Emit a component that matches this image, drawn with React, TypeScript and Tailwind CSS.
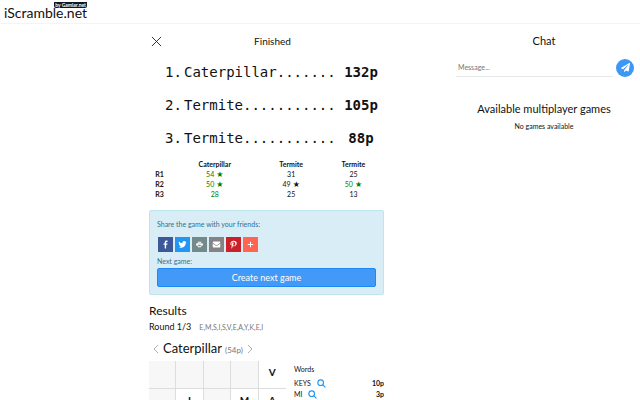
import React, { useState } from "react";

const standings = [
  { place: 1, name: "Caterpillar", points: 132 },
  { place: 2, name: "Termite", points: 105 },
  { place: 3, name: "Termite", points: 88 },
];

const rounds = [
  {
    label: "R1",
    scores: [
      { value: 54, star: true, green: true },
      { value: 31, star: false, green: false },
      { value: 25, star: false, green: false },
    ],
  },
  {
    label: "R2",
    scores: [
      { value: 50, star: true, green: true },
      { value: 49, star: true, green: false },
      { value: 50, star: true, green: true },
    ],
  },
  {
    label: "R3",
    scores: [
      { value: 28, star: false, green: true },
      { value: 25, star: false, green: false },
      { value: 13, star: false, green: false },
    ],
  },
];

const shareLinks = [
  {
    label: "Facebook",
    color: "bg-[#3b5998]",
    icon: (
      <path d="M17.8 27.5V17h3.5l.5-4h-4v-2.5c0-1.200.3-2 2-2H22V4.900C21.600 4.800 20.300 4.700 18.900 4.700c-3 0-5.100 1.900-5.100 5.300V13h-3.500v4h3.500v10.500z" />
    ),
  },
  {
    label: "Twitter",
    color: "bg-[#2196f3]",
    icon: (
      <path d="M28 8.600a10 10 0 0 1-2.800.8 5 5 0 0 0 2.100-2.700c-1 .6-2 1-3.100 1.200a4.900 4.900 0 0 0-8.400 4.500A14 14 0 0 1 5.700 7.200a4.900 4.900 0 0 0 1.500 6.600c-.8 0-1.600-.2-2.200-.6v.1a4.900 4.900 0 0 0 3.900 4.800 5 5 0 0 1-2.200.1 4.900 4.900 0 0 0 4.600 3.400A9.900 9.900 0 0 1 4 23.600a14 14 0 0 0 7.500 2.200c9.100 0 14-7.500 14-14v-.6A10 10 0 0 0 28 8.600z" />
    ),
  },
  {
    label: "Print",
    color: "bg-[#738a8d]",
    icon: (
      <path
        fillRule="evenodd"
        d="M11 8h10v3H11zM9 12h14a3 3 0 0 1 3 3v4h-4l-2 5h-8l-2-5H6v-4a3 3 0 0 1 3-3zM12 17l1 4h6l1-4z"
      />
    ),
  },
  {
    label: "Email",
    color: "bg-[#848484]",
    icon: (
      <path d="M27 22.800c0 1.200-1 2.200-2.200 2.200H7.200C6 25 5 24 5 22.800V13l8 6.200c2 1.500 4 1.500 6 0l8-6.200zM27 9.500c0 .8-.6 1.500-1.200 2L18 17.300c-1.300.9-2.700.9-4 0L6.200 11.500c-.6-.5-1.200-1.200-1.200-2C5 8 6 7 7.200 7h17.600C26 7 27 8 27 9.500z" />
    ),
  },
  {
    label: "Pinterest",
    color: "bg-[#cb2027]",
    icon: (
      <path d="M16.500 5C10.500 5 7 9.100 7 13.500c0 2.100 1.100 4.600 2.900 5.400.5.200.5 0 .9-1.700 0-.2 0-.3-.1-.5-2.200-2.700-.9-9 4.900-9 8.300 0 6.700 11.700 1.800 11.700-1.500 0-2.700-1.200-2.300-2.700.5-1.800 1.300-3.700 1.300-5 0-3.200-4.600-2.700-4.600 1.500 0 1.300.4 2.200.4 2.200l-1.900 7.900c-.4 1.800 0 4.700.1 5 1-1.300 2.200-3.600 2.600-5.200l1-3.600c.5 1 2 1.800 3.500 1.800 4.700 0 8-4.200 8-9.400C25.500 7.700 21.500 5 16.500 5z" />
    ),
  },
  {
    label: "More",
    color: "bg-[#ff6550]",
    icon: <path d="M14.500 8h3v6.500H24v3h-6.500V24h-3v-6.500H8v-3h6.500z" />,
  },
];

const board = [
  ["", "", "", "", "V"],
  ["", "I", "", "M", "A"],
];

const words = [
  { word: "KEYS", points: 10 },
  { word: "MI", points: 3 },
];

const Header = () => (
  <header className="h-6 shrink-0 border-b border-gray-100 px-1">
    <a href="#home" className="relative inline-block text-sm leading-6">
      iScramble.net
      <span className="absolute right-0 top-px rounded-b-xs bg-[#101820] px-px text-[5px] font-bold leading-[6px] text-white">
        by Gamiar.net
      </span>
    </a>
  </header>
);

const Standings = () => (
  <ol className="pl-4 pr-[5px] font-['DejaVu_Sans_Mono',monospace] text-sm leading-[33px]">
    {standings.map((player) => (
      <li key={player.place} className="flex">
        <span className="w-[19px] shrink-0">{player.place}.</span>
        <span className="min-w-0 flex-1 whitespace-nowrap">
          {player.name.padEnd(18, ".")}
        </span>
        <strong className="w-9 shrink-0 text-center">{player.points}p</strong>
      </li>
    ))}
  </ol>
);

const RoundTable = () => (
  <table className="mt-1 w-full table-fixed text-center text-[7px] leading-[10px]">
    <colgroup>
      <col className="w-[9%]" />
      <col className="w-[38%]" />
      <col className="w-[27%]" />
      <col className="w-[26%]" />
    </colgroup>
    <thead>
      <tr>
        <th></th>
        {standings.map((player) => (
          <th key={player.place}>{player.name}</th>
        ))}
      </tr>
    </thead>
    <tbody>
      {rounds.map((round) => (
        <tr key={round.label}>
          <th scope="row">{round.label}</th>
          {round.scores.map((score, i) => (
            <td key={i} className={score.green ? "text-[#008000]" : ""}>
              {score.value}
              {score.star && <span className="text-[8px] leading-none"> ★</span>}
            </td>
          ))}
        </tr>
      ))}
    </tbody>
  </table>
);

const SharePanel = () => (
  <section className="mt-[11px] rounded-xs border border-[#bee5eb] bg-[#d9edf7] p-[7px] text-[7px] text-[#31708f]">
    <p className="leading-3">Share the game with your friends:</p>
    <div className="mt-[7px] flex gap-[2px] px-px">
      {shareLinks.map((link) => (
        <a
          key={link.label}
          href="#share"
          aria-label={link.label}
          className={`flex size-[15px] items-center justify-center ${link.color}`}
        >
          <svg viewBox="0 0 32 32" className="size-[11px] fill-white">
            {link.icon}
          </svg>
        </a>
      ))}
    </div>
    <p className="mt-[3px] leading-3">Next game:</p>
    <button className="mt-px block h-[19px] w-full rounded-xs border border-[#1e88f5] bg-[#4299f7] text-[9px] leading-4 text-white">
      Create next game
    </button>
  </section>
);

const Chevron = ({ d }: { d: string }) => (
  <svg
    viewBox="0 0 6 10"
    className="h-[10px] w-[6px] fill-none stroke-[#b0b0b0]"
  >
    <path d={d} />
  </svg>
);

const Results = () => {
  const [, setPlayer] = useState(0);

  return (
    <section>
      <h2 className="mt-2 text-[12px] leading-4">Results</h2>
      <div className="flex items-center gap-2 leading-4">
        <h3 className="text-[9px]">Round 1/3</h3>
        <span className="text-[7px] text-[#777777]">E,M,S,I,S,V,E,A,Y,K,E,I</span>
      </div>
      <div className="mt-1 flex items-center gap-1 px-1 leading-[18px]">
        <button aria-label="Previous player" onClick={() => setPlayer((p) => p - 1)}>
          <Chevron d="M5 1 1 5l4 4" />
        </button>
        <h4 className="text-[13px]">
          Caterpillar <small className="text-[8px] text-[#777777]">(54p)</small>
        </h4>
        <button aria-label="Next player" onClick={() => setPlayer((p) => p + 1)}>
          <Chevron d="m1 1 4 4-4 4" />
        </button>
      </div>
      <div className="mt-[2px] flex gap-2">
        <div className="grid flex-[137] grid-cols-5">
          {board.flat().map((letter, i) => (
            <div
              key={i}
              className={`flex h-7 items-center justify-center border-b border-r border-[#dddddd] pb-1 text-[10px] font-bold nth-[5n]:border-r-0 ${
                letter ? "bg-white" : "bg-[#f7f7f7]"
              }`}
            >
              {letter}
            </div>
          ))}
        </div>
        <div className="flex-[90] pt-[2px] text-[7px]">
          <h5 className="mb-[3px] leading-3">Words</h5>
          <ul>
            {words.map((item) => (
              <li key={item.word} className="flex items-center leading-[11px]">
                <span>{item.word}</span>
                <a href="#definition" aria-label={`Look up ${item.word}`} className="ml-[6px]">
                  <svg
                    viewBox="0 0 16 16"
                    className="size-[9px] fill-none stroke-[#2196f3] stroke-2"
                  >
                    <circle cx="6.500" cy="6.500" r="5" />
                    <path d="m10 10 5 5" />
                  </svg>
                </a>
                <strong className="ml-auto">{item.points}p</strong>
              </li>
            ))}
          </ul>
        </div>
      </div>
    </section>
  );
};

const Chat = () => (
  <aside className="text-center">
    <h2 className="mt-[9px] text-[11px] leading-4">Chat</h2>
    <form
      className="mt-[9px] flex items-center gap-[3px] pl-2 pr-[6px]"
      onSubmit={(e) => e.preventDefault()}
    >
      <input
        aria-label="Message"
        placeholder="Message..."
        className="h-[19px] min-w-0 flex-1 border-b border-gray-200 px-[2px] text-[7px] outline-none placeholder:text-[#777777]"
      />
      <button
        aria-label="Send"
        className="flex size-[18px] items-center justify-center rounded-full bg-[#3d97f5]"
      >
        <svg viewBox="0 0 512 512" className="size-[9px] fill-white">
          <path d="M476 3.200 12.500 270.600c-18.100 10.400-15.800 35.600 2.200 43.200L121 358.400l287.300-253.200c5.500-4.900 13.300 2.600 8.600 8.300L176 407v80.500c0 23.600 28.500 32.900 42.500 15.800L282 426l124.600 52.200c14.200 6 30.400-2.900 33-18.200l72-432C515 7.800 493.300-6.800 476 3.200z" />
        </svg>
      </button>
    </form>
    <h3 className="mt-6 text-[11px] leading-4">Available multiplayer games</h3>
    <p className="mt-[3px] text-[7px] leading-3">No games available</p>
  </aside>
);

const App: React.FC = () => {
  return (
    <div className="flex h-screen flex-col overflow-hidden bg-white font-[Lato,'DejaVu_Sans',sans-serif] text-[#111111]">
      <Header />
      <div className="grid grid-cols-[149fr_235fr_64fr_192fr]">
        <main className="col-start-2 min-w-0">
          <div className="mt-[9px] mb-[7px] grid grid-cols-[16px_1fr_4px] items-center">
            <button aria-label="Close">
              <svg
                viewBox="0 0 12 12"
                className="ml-[2px] size-[11px] fill-none stroke-[#222222]"
              >
                <path d="m1 1 10 10M11 1 1 11" />
              </svg>
            </button>
            <h1 className="text-center text-[10px] leading-4">Finished</h1>
          </div>
          <Standings />
          <RoundTable />
          <SharePanel />
          <Results />
        </main>
        <div className="col-start-4 min-w-0">
          <Chat />
        </div>
      </div>
    </div>
  );
};

export default App;
